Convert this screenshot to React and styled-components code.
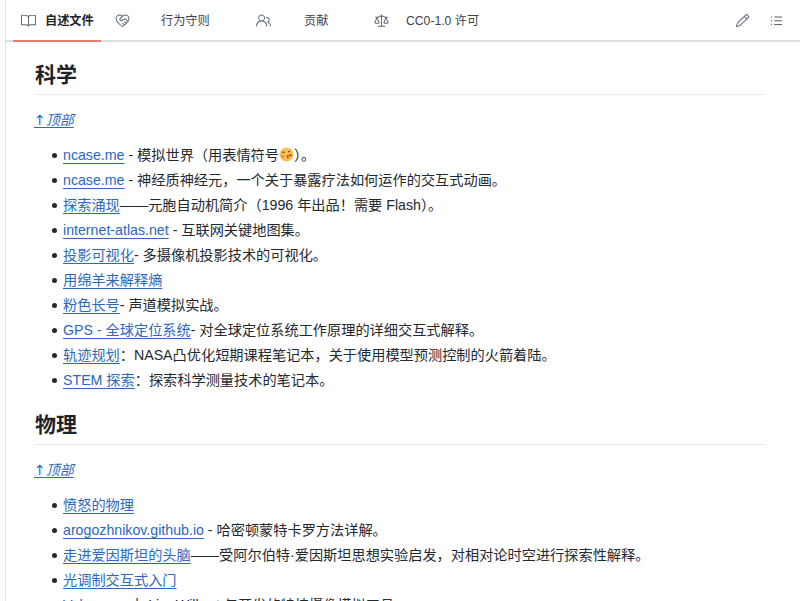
import React from 'react';
import styled, { createGlobalStyle } from 'styled-components';
import { GoBook, GoCodeOfConduct, GoPeople, GoLaw, GoPencil, GoListUnordered } from 'react-icons/go';

const GlobalStyle = createGlobalStyle`
    html, body {
        margin: 0;
        background: #fff;
    }
    body {
        width: 800px;
        height: 601px;
        overflow: hidden;
        font-family: "Liberation Sans", "Noto Sans CJK SC", sans-serif;
        color: #1f2328;
    }
`;

const Panel = styled.div`
    margin-left: 5px;
    height: 601px;
    overflow: hidden;
    border-left: 1px solid #dfe1e4;
    box-sizing: border-box;
`;

const TabBar = styled.nav`
    height: 42px;
    box-sizing: border-box;
    display: flex;
    align-items: stretch;
    padding-left: 7px;
    padding-right: 16px;
    border-bottom: 2px solid #dcdee0;
`;

const Tab = styled.div`
    display: flex;
    align-items: center;
    width: ${(p) => p.$width}px;
    height: 42px;
    box-sizing: border-box;
    padding-left: ${(p) => p.$pad}px;
    font-size: 12.2px;
    font-weight: ${(p) => (p.$active ? 600 : 400)};
    color: ${(p) => (p.$active ? '#1f2328' : '#3c4248')};
    border-bottom: 2px solid ${(p) => (p.$active ? '#e3806a' : 'transparent')};

    svg {
        width: 15px;
        height: 15px;
        flex: none;
        color: #59636e;
    }
`;

const TabLabel = styled.span`
    margin-left: ${(p) => p.$gap}px;
    white-space: nowrap;
`;

const TabTools = styled.div`
    margin-left: auto;
    display: flex;
    align-items: center;
    gap: 19px;
    color: #59636e;

    svg {
        width: 15px;
        height: 15px;
    }
`;

const Article = styled.main`
    padding: 0 0 0 28px;
    width: 732px;
`;

const Heading = styled.h2`
    margin: ${(p) => (p.$first ? 20 : 19)}px 0 0;
    padding-bottom: 7px;
    height: 25px;
    font-size: 21px;
    line-height: 25px;
    font-weight: 700;
    text-indent: 1px;
    color: #1f2328;
    border-bottom: 1px solid #e9ebee;
    box-sizing: content-box;
`;

const TopLink = styled.a`
    display: inline-block;
    margin-top: 15px;
    font-size: 14px;
    line-height: 20px;
    font-style: italic;
    color: #2c68c0;
    text-decoration: underline;
    text-underline-offset: 2px;
`;

const TopArrow = styled.span`
    font-family: "DejaVu Sans", sans-serif;
    font-style: normal;
`;

const LinkList = styled.ul`
    list-style: none;
    margin: 13px 0 0;
    padding: 0 0 0 29px;
`;

const Item = styled.li`
    position: relative;
    height: 25px;
    font-size: 14.2px;
    line-height: 25px;
    white-space: nowrap;
    color: #24292f;

    &::before {
        content: '';
        position: absolute;
        left: -11px;
        top: 10px;
        width: 5px;
        height: 5px;
        border-radius: 50%;
        background: #24292f;
    }

    a {
        color: #2c68c0;
        text-decoration: underline;
        text-underline-offset: 3px;
    }
`;

const Kiss = () => (
    <svg width="15" height="15" viewBox="0 0 14 14" style={{ verticalAlign: '-2px' }}>
        <circle cx="7" cy="7" r="6.5" fill="#f7c04f" />
        <path d="M3 5.2q1.2-1 2.4 0M8.4 4.6l2.2-.8" stroke="#7a4a1a" strokeWidth="1" fill="none" />
        <path d="M7.4 8.2h1.4l-1 1 1 .9H7.4" stroke="#7a4a1a" strokeWidth=".9" fill="none" />
        <circle cx="3.6" cy="8.8" r="1.5" fill="#ef8a6e" />
        <path d="M10.2 7.2c-.8-.9-1.9.2-.9 1.1l1.2 1 1.2-1c.9-.9-.6-2-1.5-1.1z" fill="#e2453c" />
    </svg>
);

const scienceLinks = [
    ['ncase.me', ' - 模拟世界（用表情符号', '）。', true],
    ['ncase.me', ' - 神经质神经元，一个关于暴露疗法如何运作的交互式动画。'],
    ['探索涌现', '——元胞自动机简介（1996 年出品！需要 Flash）。'],
    ['internet-atlas.net', ' - 互联网关键地图集。'],
    ['投影可视化', '- 多摄像机投影技术的可视化。'],
    ['用绵羊来解释熵', ''],
    ['粉色长号', '- 声道模拟实战。'],
    ['GPS - 全球定位系统', '- 对全球定位系统工作原理的详细交互式解释。'],
    ['轨迹规划', '：NASA凸优化短期课程笔记本，关于使用模型预测控制的火箭着陆。'],
    ['STEM 探索', '：探索科学测量技术的笔记本。'],
];

const physicsLinks = [
    ['愤怒的物理', ''],
    ['arogozhnikov.github.io', ' - 哈密顿蒙特卡罗方法详解。'],
    ['走进爱因斯坦的头脑', '——受阿尔伯特·爱因斯坦思想实验启发，对相对论时空进行探索性解释。'],
    ['光调制交互式入门', ''],
    ['Velocme', ' - 由 Lior Wilhart 与开发的特技摄像模拟工具。'],
];

const LinkRows = ({ rows }) => (
    <LinkList>
        {rows.map(([label, text, tail, emoji], i) => (
            <Item key={i}>
                <a href="#">{label}</a>
                {text}
                {emoji && <Kiss />}
                {tail}
            </Item>
        ))}
    </LinkList>
);

const App = () => {
    return (
        <Panel>
            <GlobalStyle />
            <TabBar>
                <Tab $width={88} $pad={8} $active>
                    <GoBook />
                    <TabLabel $gap={9}>自述文件</TabLabel>
                </Tab>
                <Tab $width={138} $pad={14}>
                    <GoCodeOfConduct />
                    <TabLabel $gap={31}>行为守则</TabLabel>
                </Tab>
                <Tab $width={117} $pad={17}>
                    <GoPeople />
                    <TabLabel $gap={33}>贡献</TabLabel>
                </Tab>
                <Tab $width={150} $pad={18}>
                    <GoLaw />
                    <TabLabel $gap={17}>CC0-1.0 许可</TabLabel>
                </Tab>
                <TabTools>
                    <GoPencil />
                    <GoListUnordered />
                </TabTools>
            </TabBar>
            <Article>
                <Heading $first>科学</Heading>
                <TopLink href="#"><TopArrow>↑</TopArrow>顶部</TopLink>
                <LinkRows rows={scienceLinks} />
                <Heading>物理</Heading>
                <TopLink href="#"><TopArrow>↑</TopArrow>顶部</TopLink>
                <LinkRows rows={physicsLinks} />
            </Article>
        </Panel>
    );
};

export default App;
